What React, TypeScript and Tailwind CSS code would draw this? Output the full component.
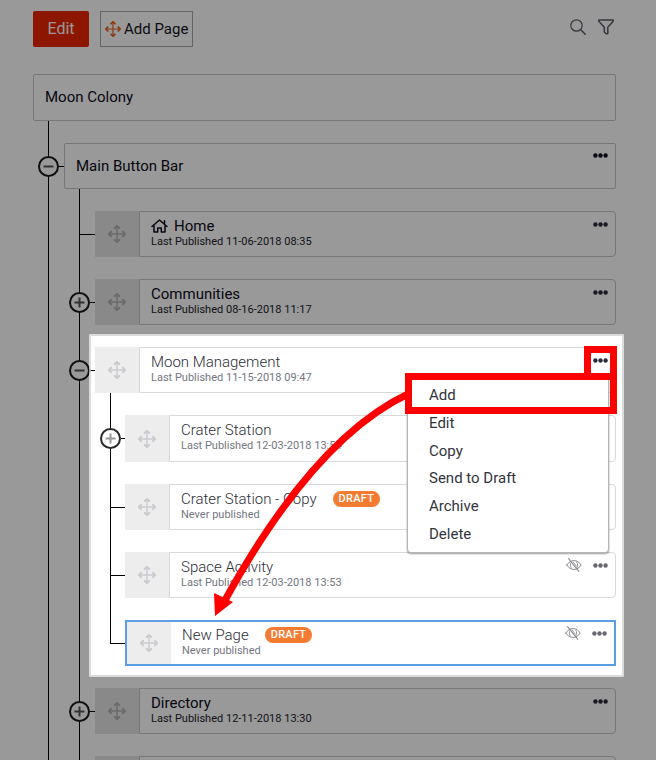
import clsx from "clsx";

type Page = {
  title?: string;
  info?: string;
  home?: boolean;
  draft?: boolean;
  hidden?: boolean;
  selected?: boolean;
  menu?: boolean;
  tall?: boolean;
  toggle?: "open" | "closed";
  children?: Page[];
};

const pages: Page[] = [
  { title: "Home", info: "Last Published 11-06-2018 08:35", home: true },
  {
    title: "Communities",
    info: "Last Published 08-16-2018 11:17",
    toggle: "closed",
  },
  {
    title: "Moon Management",
    info: "Last Published 11-15-2018 09:47",
    toggle: "open",
    menu: true,
    children: [
      {
        title: "Crater Station",
        info: "Last Published 12-03-2018 13:54",
        toggle: "closed",
        tall: true,
      },
      { title: "Crater Station - Copy", info: "Never published", draft: true },
      {
        title: "Space Activity",
        info: "Last Published 12-03-2018 13:53",
        hidden: true,
      },
      {
        title: "New Page",
        info: "Never published",
        draft: true,
        hidden: true,
        selected: true,
      },
    ],
  },
  {
    title: "Directory",
    info: "Last Published 12-11-2018 13:30",
    toggle: "closed",
  },
  {},
];

const menuItems = ["Add", "Edit", "Copy", "Send to Draft", "Archive", "Delete"];

const MoveIcon = ({ className }: { className?: string }) => (
  <svg
    viewBox="0 0 18 18"
    className={className}
    fill="none"
    stroke="currentColor"
    strokeLinecap="round"
    strokeLinejoin="round"
    aria-hidden="true"
  >
    <path d="M9 1v16M1 9h16" strokeWidth="1.4" />
    <path
      d="M6.8 3 9 1l2.2 2M6.8 15 9 17l2.2-2M3 6.8 1 9l2 2.2M15 6.800 17 9l-2 2.200"
      strokeWidth="2"
    />
  </svg>
);

const DotsIcon = () => (
  <svg viewBox="0 0 15 5" className="w-[15px] h-[5px]" fill="currentColor" aria-hidden="true">
    <circle cx="2.4" cy="2.5" r="2.2" />
    <circle cx="7.5" cy="2.5" r="2.2" />
    <circle cx="12.6" cy="2.5" r="2.2" />
  </svg>
);

const HiddenIcon = () => (
  <svg
    viewBox="0 0 16 14"
    className="w-4 h-3.5 text-[#8b8c93]"
    fill="none"
    stroke="currentColor"
    strokeLinecap="round"
    aria-label="Hidden"
  >
    <path d="M.8 7C2.6 4.2 5 2.6 8 2.6S13.4 4.2 15.2 7C13.4 9.8 11 11.4 8 11.4S2.6 9.8.8 7Z" />
    <path d="M5.200 4.200C4 6 4 8.200 5.200 9.900M10.800 4.200C12 6 12 8.200 10.800 9.900" strokeWidth=".9" />
    <path d="M2.6.7 12.8 13.3" strokeWidth="1.1" />
    <path d="M7.200 4.200 10.400 8.200" strokeWidth=".9" />
  </svg>
);

const HomeIcon = () => (
  <svg
    viewBox="0 0 17 14"
    className="w-[17px] h-3.5"
    fill="none"
    stroke="currentColor"
    strokeWidth="1.5"
    strokeLinejoin="round"
    strokeLinecap="round"
    aria-hidden="true"
  >
    <path d="M1 7.5 8.5 1 16 7.5M3 6.5V13h3.7V9h3.6v4H14V6.5M13.5 4.5V1.7" />
  </svg>
);

const Toggle = ({ state, light }: { state: "open" | "closed"; light: boolean }) => (
  <button
    aria-label={state === "open" ? "Collapse" : "Expand"}
    className={clsx(
      "flex items-center justify-center size-[21px] -ml-[10px] shrink-0 rounded-full border-2 bg-white",
      light ? "border-[#2a2a2a] text-[#999]" : "border-[#1a1a1a] text-[#555]",
    )}
  >
    <svg viewBox="0 0 11 11" className="size-[11px]" stroke="currentColor" strokeWidth="2" aria-hidden="true">
      <path d={state === "open" ? "M.5 5.5h10" : "M.5 5.5h10M5.5.5v10"} />
    </svg>
  </button>
);

const Menu = () => (
  <ul className="absolute z-20 top-7 right-[7px] w-[202px] h-[178px] pt-[5px] pb-1 grid grid-rows-6 bg-white border border-[#b5b5b5] rounded-sm shadow-[0_1px_2px_rgba(0,0,0,0.4)]">
    {menuItems.map((item) => (
      <li key={item} className="flex">
        <button className="flex-1 pl-[21px] text-left text-[15px] leading-5 text-[#33343c]">
          {item}
        </button>
      </li>
    ))}
  </ul>
);

const Callout = () => (
  <svg
    viewBox="205 346 412 272"
    className="absolute z-30 -top-px -right-px w-[412px] h-[272px] pointer-events-none"
    fill="none"
    stroke="#f00"
    strokeWidth="7"
    aria-hidden="true"
  >
    <path d="M587.5 376V349.5h26V376" />
    <path d="M408.5 376.5h205v34h-205z" />
    <path d="M409 393.5Q314 438 224 602" />
    <path d="M214 593l19 9-18 14z" fill="#f00" stroke="none" />
  </svg>
);

const Row = ({ page, light }: { page: Page; light: boolean }) => (
  <div
    className={clsx(
      "relative flex flex-1 min-w-0",
      page.tall ? "h-[47px]" : "h-[46px]",
      page.selected && "border-2 border-[#5a9fe3]",
    )}
  >
    <div
      className={clsx(
        "flex items-center justify-center w-11 shrink-0",
        light ? "bg-[#ededed] text-[#c9cbcf]" : "bg-[#e4e4e4] text-[#b0b1b5]",
      )}
    >
      <MoveIcon className="size-[18px]" />
    </div>
    <div
      className={clsx(
        "flex flex-1 min-w-0 justify-between pl-[11px] pr-[7px]",
        page.selected ? "pt-[5px]" : "pt-1.5 border rounded-r-sm",
        light ? "border-[#d9d9d9]" : "border-[#c6c6c6]",
      )}
    >
      <div>
        <div
          className={clsx(
            "flex items-center h-4 text-[15px] leading-4",
            light ? "font-light text-[#2c2e38]" : "text-[#0c0d1c]",
          )}
        >
          {page.home && (
            <span className="mr-1.5">
              <HomeIcon />
            </span>
          )}
          {page.title}
          {page.draft && (
            <span className="ml-4 px-1.5 h-4 rounded-full bg-[#f47b30] text-white text-[11px] leading-4 font-medium tracking-wide">
              DRAFT
            </span>
          )}
        </div>
        <div
          className={clsx(
            "text-[11px] leading-4",
            light ? "text-[#74767f]" : "text-[#1c1d2c]",
          )}
        >
          {page.info}
        </div>
      </div>
      <div
        className={clsx(
          "flex items-center gap-[11px] h-3",
          light && !page.menu ? "text-[#666771]" : "text-[#2a2b3a]",
        )}
      >
        {page.hidden && <HiddenIcon />}
        <button aria-label="Page actions">
          <DotsIcon />
        </button>
      </div>
    </div>
    {page.menu && <Menu />}
    {page.menu && <Callout />}
  </div>
);

const Branch = ({ pages, light = false }: { pages: Page[]; light?: boolean }) => (
  <ul className="ml-[15px]">
    {pages.map((page, i) => (
      <li
        key={i}
        className={clsx(
          "relative pt-[22px] before:absolute before:left-0 before:top-0 before:w-px before:bg-black",
          light && i === pages.length - 1 ? "before:h-[45px]" : "before:h-full",
        )}
      >
        {page.menu && (
          <div className="absolute z-10 top-[9px] -bottom-[11px] left-[10px] -right-2 border-2 border-[#ccc]/70 rounded-xs pointer-events-none shadow-[0_0_0_2000px_rgba(0,0,0,0.4)]" />
        )}
        <div className="relative flex">
          <div
            className={clsx(
              "flex items-center shrink-0",
              light ? "w-[15px]" : "w-4",
            )}
          >
            {page.toggle && <Toggle state={page.toggle} light={light} />}
            <div className="flex-1 h-px bg-black" />
          </div>
          <Row page={page} light={light || !!page.menu} />
        </div>
        {page.children && (
          <div className="pl-4">
            <Branch pages={page.children} light />
          </div>
        )}
      </li>
    ))}
  </ul>
);

const Toolbar = () => (
  <header className="flex items-center justify-between">
    <div className="flex gap-[11px]">
      <button className="w-14 h-9 rounded-xs bg-[#e92500] text-white text-base">
        Edit
      </button>
      <button className="flex items-center gap-[3px] h-9 px-1 border border-[#a5a8ad] text-[15px] text-[#14151f]">
        <MoveIcon className="size-4 text-[#e8631c]" />
        Add Page
      </button>
    </div>
    <div className="flex items-center gap-3 pr-0.5 pb-1 text-[#5b5c68]">
      <button aria-label="Search">
        <svg viewBox="0 0 16 16" className="size-4" fill="none" stroke="currentColor" strokeWidth="1.2" strokeLinecap="round" aria-hidden="true">
          <circle cx="6.5" cy="6.5" r="5.7" />
          <path d="m10.8 10.8 4.4 4.4" strokeWidth="1.5" />
        </svg>
      </button>
      <button aria-label="Filter">
        <svg viewBox="0 0 16 16" className="size-4" fill="none" stroke="currentColor" strokeWidth="1.5" strokeLinejoin="round" aria-hidden="true">
          <path d="M.8 1h14.4v1.3L9.800 8.200v6.500H8.200L6.300 13V8.200L.8 2.300Z" />
        </svg>
      </button>
    </div>
  </header>
);

export default function App() {
  return (
    <main className="relative h-screen overflow-hidden pl-[33px] pr-10 pt-[11px] bg-white font-['Roboto',sans-serif]">
      <Toolbar />
      <div className="mt-[27px]">
        <div className="flex items-center h-[47px] pl-[11px] border border-[#c6c6c6] rounded-xs text-[15px] text-[#0c0d1c]">
          Moon Colony
        </div>
        <ul className="ml-[15px]">
          <li className="relative pt-[22px] before:absolute before:left-0 before:top-0 before:w-px before:h-full before:bg-black">
            <div className="relative flex">
              <div className="flex items-center w-4 shrink-0">
                <Toggle state="open" light={false} />
                <div className="flex-1 h-px bg-black" />
              </div>
              <div className="flex flex-1 justify-between h-[46px] pl-[11px] pr-[7px] border border-[#c6c6c6] rounded-xs text-[15px] text-[#0c0d1c]">
                <span className="self-center">Main Button Bar</span>
                <button aria-label="Page actions" className="self-start pt-[9px]">
                  <DotsIcon />
                </button>
              </div>
            </div>
            <div className="pl-4">
              <Branch pages={pages} />
            </div>
          </li>
        </ul>
      </div>
    </main>
  );
}
